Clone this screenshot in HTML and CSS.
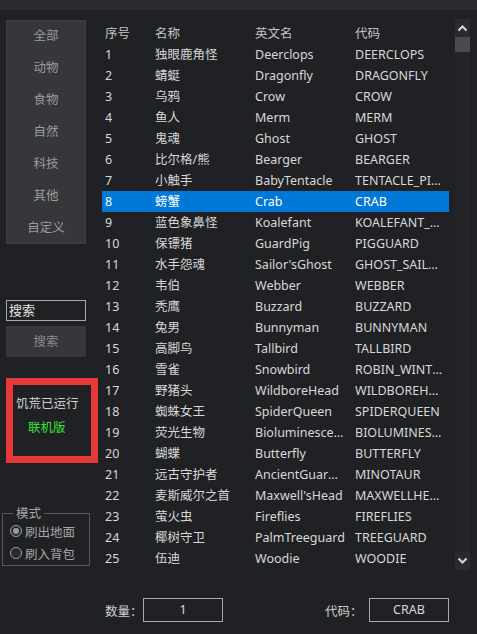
FILE: index.html
```html
<!DOCTYPE html>
<html lang="zh">
<head>
<meta charset="utf-8">
<link rel="stylesheet" href="styles.css">
</head>
<body>
<div class="topbar"></div>
<div class="app">
  <aside class="side">
    <div class="menu">
      <div class="menu-item">全部</div>
      <div class="menu-item">动物</div>
      <div class="menu-item">食物</div>
      <div class="menu-item">自然</div>
      <div class="menu-item">科技</div>
      <div class="menu-item">其他</div>
      <div class="menu-item">自定义</div>
    </div>
    <div class="search-input">搜索</div>
    <div class="search-btn">搜索</div>
    <div class="status">
      <div class="status-line">饥荒已运行</div>
      <div class="status-green">联机版</div>
    </div>
    <div class="group">
      <div class="legend">模式</div>
      <div class="radio"><span class="dot checked"></span>刷出地面</div>
      <div class="radio"><span class="dot"></span>刷入背包</div>
    </div>
  </aside>
  <main class="main">
    <div class="table-wrap">
      <div class="table">
        <div class="row head"><span>序号</span><span>名称</span><span>英文名</span><span>代码</span></div>
        <div class="row"><span>1</span><span>独眼鹿角怪</span><span>Deerclops</span><span>DEERCLOPS</span></div>
        <div class="row"><span>2</span><span>蜻蜓</span><span>Dragonfly</span><span>DRAGONFLY</span></div>
        <div class="row"><span>3</span><span>乌鸦</span><span>Crow</span><span>CROW</span></div>
        <div class="row"><span>4</span><span>鱼人</span><span>Merm</span><span>MERM</span></div>
        <div class="row"><span>5</span><span>鬼魂</span><span>Ghost</span><span>GHOST</span></div>
        <div class="row"><span>6</span><span>比尔格/熊</span><span>Bearger</span><span>BEARGER</span></div>
        <div class="row"><span>7</span><span>小触手</span><span>BabyTentacle</span><span>TENTACLE_PILLAR_ARM</span></div>
        <div class="row sel"><span>8</span><span>螃蟹</span><span>Crab</span><span>CRAB</span></div>
        <div class="row"><span>9</span><span>蓝色象鼻怪</span><span>Koalefant</span><span>KOALEFANT_SUMMER</span></div>
        <div class="row"><span>10</span><span>保镖猪</span><span>GuardPig</span><span>PIGGUARD</span></div>
        <div class="row"><span>11</span><span>水手怨魂</span><span>Sailor'sGhost</span><span>GHOST_SAILOR</span></div>
        <div class="row"><span>12</span><span>韦伯</span><span>Webber</span><span>WEBBER</span></div>
        <div class="row"><span>13</span><span>秃鹰</span><span>Buzzard</span><span>BUZZARD</span></div>
        <div class="row"><span>14</span><span>兔男</span><span>Bunnyman</span><span>BUNNYMAN</span></div>
        <div class="row"><span>15</span><span>高脚鸟</span><span>Tallbird</span><span>TALLBIRD</span></div>
        <div class="row"><span>16</span><span>雪雀</span><span>Snowbird</span><span>ROBIN_WINTER</span></div>
        <div class="row"><span>17</span><span>野猪头</span><span>WildboreHead</span><span>WILDBOREHEAD</span></div>
        <div class="row"><span>18</span><span>蜘蛛女王</span><span>SpiderQueen</span><span>SPIDERQUEEN</span></div>
        <div class="row"><span>19</span><span>荧光生物</span><span>Bioluminescence</span><span>BIOLUMINESCENCE</span></div>
        <div class="row"><span>20</span><span>蝴蝶</span><span>Butterfly</span><span>BUTTERFLY</span></div>
        <div class="row"><span>21</span><span>远古守护者</span><span>AncientGuardian</span><span>MINOTAUR</span></div>
        <div class="row"><span>22</span><span>麦斯威尔之首</span><span>Maxwell'sHead</span><span>MAXWELLHEAD</span></div>
        <div class="row"><span>23</span><span>萤火虫</span><span>Fireflies</span><span>FIREFLIES</span></div>
        <div class="row"><span>24</span><span>椰树守卫</span><span>PalmTreeguard</span><span>TREEGUARD</span></div>
        <div class="row"><span>25</span><span>伍迪</span><span>Woodie</span><span>WOODIE</span></div>
      </div>
      <div class="scrollbar">
        <div class="arrow"><svg width="11" height="8" viewBox="0 0 11 8"><path d="M1.5 6.5 L5.5 2.5 L9.5 6.5" fill="none" stroke="#d8d8d8" stroke-width="2"/></svg></div>
        <div class="thumb"></div>
        <div class="track"></div>
        <div class="arrow"><svg width="11" height="8" viewBox="0 0 11 8"><path d="M1.5 1.5 L5.5 5.5 L9.5 1.5" fill="none" stroke="#d8d8d8" stroke-width="2"/></svg></div>
      </div>
    </div>
    <div class="bottom">
      <div class="field"><span class="label">数量：</span><div class="box">1</div></div>
      <div class="field"><span class="label">代码：</span><div class="box">CRAB</div></div>
    </div>
  </main>
</div>
</body>
</html>
```
FILE: styles.css
```css
* { box-sizing: border-box; }
html, body { margin: 0; padding: 0; }
body {
  width: 477px;
  height: 634px;
  overflow: hidden;
  background: #202124;
  font-family: "Noto Sans", "Noto Sans CJK SC", sans-serif;
  font-size: 12.5px;
  color: #d6d6d6;
}
.topbar {
  height: 10px;
  background: #292a2d;
}
.app {
  display: flex;
  height: 624px;
}
.side {
  width: 100px;
  padding-left: 6px;
  display: flex;
  flex-direction: column;
}
.menu {
  margin-top: 10px;
  width: 80px;
  background: #35373a;
  border: 1px solid #3d3f42;
  display: flex;
  flex-direction: column;
}
.menu-item {
  height: 32px;
  line-height: 32px;
  text-align: center;
  color: #9c9c9c;
}
.menu-item:first-child { height: 31px; line-height: 30px; }
.menu-item:last-child { height: 31px; line-height: 32px; }
.search-input {
  margin-top: 56px;
  width: 80px;
  height: 21px;
  border: 1px solid #a9a9a9;
  color: #e0e0e0;
  line-height: 18px;
  padding-left: 2px;
  font-size: 13px;
}
.search-btn {
  margin-top: 5px;
  width: 80px;
  height: 31px;
  background: #35373a;
  color: #8c8c8c;
  text-align: center;
  line-height: 31px;
}
.status {
  margin-top: 21px;
  width: 92px;
  height: 85px;
  border: 7px solid #e63a3a;
  background: #202124;
  padding-top: 10px;
  padding-left: 3px;
}
.status-line {
  color: #d0d0d0;
  line-height: 18px;
}
.status-green {
  color: #38e038;
  margin-top: 6px;
  padding-left: 12px;
  line-height: 18px;
}
.group {
  margin-top: 50px;
  margin-left: -4px;
  width: 88px;
  height: 53px;
  border: 1px solid #55575a;
  position: relative;
  padding-top: 6px;
  padding-left: 7px;
}
.legend {
  position: absolute;
  top: -8px;
  left: 10px;
  padding: 0 3px;
  background: #202124;
  color: #a6a6a6;
  line-height: 16px;
}
.radio {
  display: flex;
  align-items: center;
  gap: 3px;
  height: 22px;
  color: #a6a6a6;
}
.dot {
  width: 12px;
  height: 12px;
  border-radius: 50%;
  border: 1px solid #a0a0a0;
  background: #2a2b2e;
  position: relative;
}
.dot.checked::after {
  content: "";
  position: absolute;
  left: 2px;
  top: 2px;
  width: 6px;
  height: 6px;
  border-radius: 50%;
  background: #9a9a9a;
}
.main {
  width: 377px;
  display: flex;
  flex-direction: column;
}
.table-wrap {
  display: flex;
  margin-top: 9px;
  height: 551px;
}
.table {
  width: 355px;
  padding-top: 4px;
  padding-left: 2px;
  padding-right: 6px;
}
.row {
  display: grid;
  grid-template-columns: 50px 100px 100px 97px;
  height: 21px;
  line-height: 21px;
  color: #d8d8d8;
}
.row span {
  padding-left: 3px;
  padding-right: 7px;
  white-space: nowrap;
  overflow: hidden;
  text-overflow: ellipsis;
}
.row span:last-child { padding-right: 4px; }
.row.head { color: #c4c4c4; }
.row.sel { background: #0078d7; color: #ffffff; }
.scrollbar {
  width: 15px;
  display: flex;
  flex-direction: column;
  background: #1f2023;
}
.arrow {
  height: 18px;
  display: flex;
  align-items: center;
  justify-content: center;
  background: #2a2b2e;
}
.thumb {
  height: 15px;
  background: #4a4b4e;
}
.track { flex: 1; background: #232427; }
.bottom {
  display: flex;
  justify-content: space-between;
  padding-left: 5px;
  padding-right: 28px;
  margin-top: 28px;
}
.field {
  display: flex;
  align-items: center;
}
.label {
  color: #cfcfcf;
  width: 38px;
}
.field:last-child .label { width: 44px; }
.box {
  width: 80px;
  height: 24px;
  border: 1px solid #a9a9a9;
  text-align: center;
  line-height: 22px;
  color: #d8d8d8;
}
```
